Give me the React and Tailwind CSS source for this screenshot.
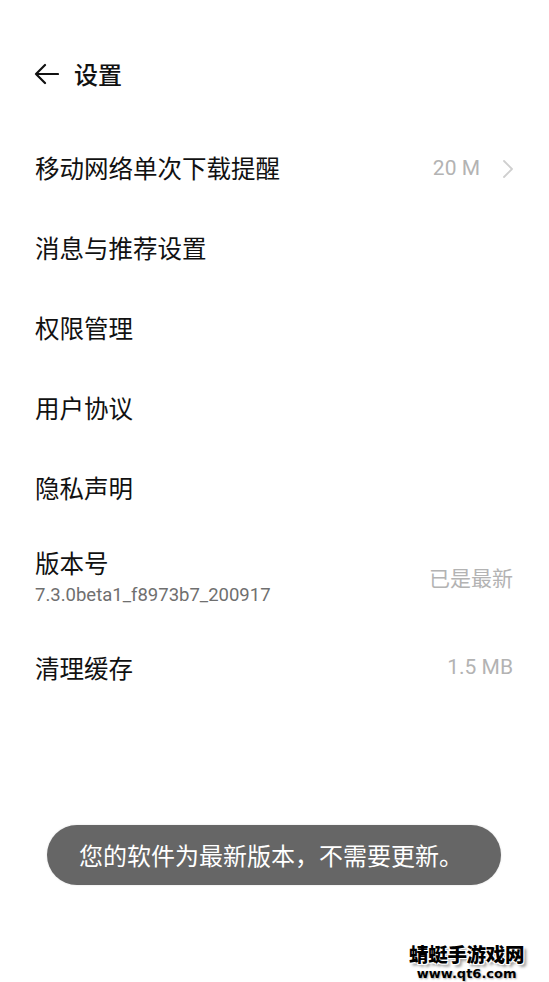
import React from "react";

const font = { fontFamily: '"Noto Sans CJK SC", "Noto Sans", Roboto, sans-serif' };
const latin = { fontFamily: 'Roboto, "Noto Sans", sans-serif' };

function Row({ title, right, chevron }) {
  return (
    <div className="flex items-center justify-between h-[80px] pl-[35px] pr-[36px]">
      <span className="text-[24.5px] leading-[32px] text-[#111]">{title}</span>
      {right && (
        <div className="flex items-center mt-[2px]">
          <span className="text-[21px] text-[#b3b3b3]" style={latin}>{right}</span>
          {chevron && (
            <svg width="12" height="20" viewBox="0 0 12 20" className="ml-[22px] mr-[-1px]">
              <path d="M2 2 L10 10 L2 18" fill="none" stroke="#cfcfcf" strokeWidth="1.8" strokeLinecap="round" strokeLinejoin="round" />
            </svg>
          )}
        </div>
      )}
    </div>
  );
}

export default function App() {
  return (
    <div className="relative w-[549px] h-[982px] bg-white overflow-hidden" style={font}>
      <div className="flex items-center h-[48px] mt-[50px] pl-[34px]">
        <svg width="25" height="22" viewBox="0 0 25 22">
          <path d="M24 11 H2 M11 2 L2 11 L11 20" fill="none" stroke="#111" strokeWidth="2.2" strokeLinecap="round" strokeLinejoin="round" />
        </svg>
        <span className="ml-[15px] text-[24px] font-medium text-[#111]">设置</span>
      </div>
      <div className="mt-[30px]">
        <Row title="移动网络单次下载提醒" right="20 M" chevron />
        <Row title="消息与推荐设置" />
        <Row title="权限管理" />
        <Row title="用户协议" />
        <Row title="隐私声明" />
        <div className="flex items-center justify-between h-[100px] pl-[35px] pr-[36px]">
          <div className="flex flex-col mt-[-2px]">
            <span className="text-[24.5px] leading-[32px] text-[#111]">版本号</span>
            <span className="text-[18.5px] leading-[24px] text-[#6f6f6f] mt-[4px]" style={latin}>7.3.0beta1_f8973b7_200917</span>
          </div>
          <span className="text-[21px] text-[#b3b3b3]">已是最新</span>
        </div>
        <div className="flex items-center justify-between h-[80px] pl-[35px] pr-[36px]">
          <span className="text-[24.5px] leading-[32px] text-[#111]">清理缓存</span>
          <span className="text-[21px] text-[#b3b3b3]" style={latin}>1.5 MB</span>
        </div>
      </div>
      <div className="absolute left-[47px] top-[825px] w-[454px] h-[60px] rounded-full bg-[#666666] flex items-center justify-center shadow-[0_0_2px_rgba(0,0,0,0.15)]">
        <span className="text-[24px] text-white mr-[6px]">您的软件为最新版本，不需要更新。</span>
      </div>
      <div className="absolute left-[409px] top-[941px] flex flex-col items-center">
        <span className="block text-[19.5px] leading-[26px] font-black text-black tracking-[-0.3px]" style={{ textShadow: "1px 1px 0 #fff, -1px -1px 0 #fff, 1px -1px 0 #fff, -1px 1px 0 #fff, 3px 3px 3px #999" }}>蜻蜓手游戏网</span>
        <span className="block text-[13px] leading-[14px] font-black text-black" style={{ fontFamily: '"DejaVu Sans", sans-serif', textShadow: "1px 1px 2px #aaa" }}>www.qt6.com</span>
      </div>
    </div>
  );
}
